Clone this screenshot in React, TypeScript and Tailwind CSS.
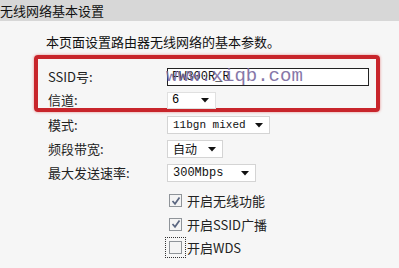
import React from "react";

const cjk = { fontFamily: '"Noto Sans CJK SC", "Liberation Sans", sans-serif' };
const mono = { fontFamily: '"Liberation Mono", "Noto Sans CJK SC", monospace' };

function Arrow() {
  return (
    <svg width="8" height="5" viewBox="0 0 8 5" className="shrink-0">
      <path d="M0 0 H8 L4 4.5 Z" fill="#111" />
    </svg>
  );
}

function Select({ value, width, cjkText }: { value: string; width: string; cjkText?: boolean }) {
  return (
    <div
      className={`flex h-[18px] items-center justify-between whitespace-nowrap border border-[#d4d4d4] bg-white pl-[5px] pr-[6px] text-[12px] text-[#111] ${width}`}
      style={cjkText ? cjk : mono}
    >
      <span className="leading-none">{value}</span>
      <Arrow />
    </div>
  );
}

function Row({ label, children, h = "h-[24px]" }: { label: string; children: React.ReactNode; h?: string }) {
  return (
    <div className={`flex items-center ${h}`}>
      <div className="w-[119px] shrink-0 text-[13px] text-[#222]" style={cjk}>
        {label}
      </div>
      {children}
    </div>
  );
}

function Check({ label, checked, focus }: { label: string; checked: boolean; focus?: boolean }) {
  return (
    <div className="flex h-[23.5px] items-center">
      <div
        className={`flex h-[21px] w-[21px] items-center justify-center ${focus ? "border border-dotted border-[#333]" : "border border-transparent"}`}
      >
        <div className="flex h-[13px] w-[13px] items-center justify-center border border-[#8f9499] bg-[#f4f4f4]">
          {checked && (
            <svg width="10" height="10" viewBox="0 0 10 10">
              <path d="M1.5 5 L4 7.8 L8.5 1.5" fill="none" stroke="#5a6680" strokeWidth="1.7" />
            </svg>
          )}
        </div>
      </div>
      <span className="ml-[1px] text-[13px] text-[#222]" style={cjk}>
        {label}
      </span>
    </div>
  );
}

export default function App() {
  return (
    <div className="h-[268px] w-[399px] overflow-hidden bg-[#f6f6f6]">
      <div className="h-[21px] bg-[#d7d7d7] text-[13px] leading-[21px] text-[#111]" style={cjk}>
        无线网络基本设置
      </div>
      <div className="h-[34px] pl-[46px] pt-[12px] text-[13px] leading-[18px] text-[#111]" style={cjk}>
        本页面设置路由器无线网络的基本参数。
      </div>
      <div className="ml-[34px] h-[57px] w-[346px] rounded-[4px] border-[4px] border-[#c8252b] pl-[10px] pt-[6px] shadow-[0_0_3px_#e58a8a]">
        <Row label="SSID号:" h="h-[24px]">
          <div className="relative flex h-[18px] w-[202px] items-center border border-[#222] bg-white pl-[4px] text-[12px] text-[#111]" style={mono}>
            <span>FW300R_R</span>
            <span
              className="absolute left-[-2px] top-[-5px] whitespace-nowrap text-[19px] leading-[24px] text-[#7a6aa0] opacity-90"
              style={{ fontFamily: '"Liberation Mono", monospace' }}
            >
              www.xiqb.com
            </span>
          </div>
        </Row>
        <Row label="信道:" h="h-[22px]">
          <div className="flex h-[17px] w-[49px] items-center justify-between border border-[#e0e0e0] bg-white pl-[4px] pr-[6px] text-[12px]" style={mono}>
            <span className="leading-none">6</span>
            <Arrow />
          </div>
        </Row>
      </div>
      <div className="pl-[48px] pt-[1px]">
        <Row label="模式:">
          <div
            className="flex h-[18px] w-[103px] items-center justify-between whitespace-nowrap border border-[#d4d4d4] bg-white pl-[5px] pr-[6px] text-[11px] text-[#111]"
            style={mono}
          >
            <span className="leading-none">11bgn mixed</span>
            <Arrow />
          </div>
        </Row>
        <Row label="频段带宽:">
          <Select value="自动" width="w-[56px]" cjkText />
        </Row>
        <Row label="最大发送速率:">
          <Select value="300Mbps" width="w-[89px]" />
        </Row>
        <div className="pl-[117px] pt-[4px]">
          <Check label="开启无线功能" checked />
          <Check label="开启SSID广播" checked />
          <Check label="开启WDS" checked={false} focus />
        </div>
      </div>
    </div>
  );
}
